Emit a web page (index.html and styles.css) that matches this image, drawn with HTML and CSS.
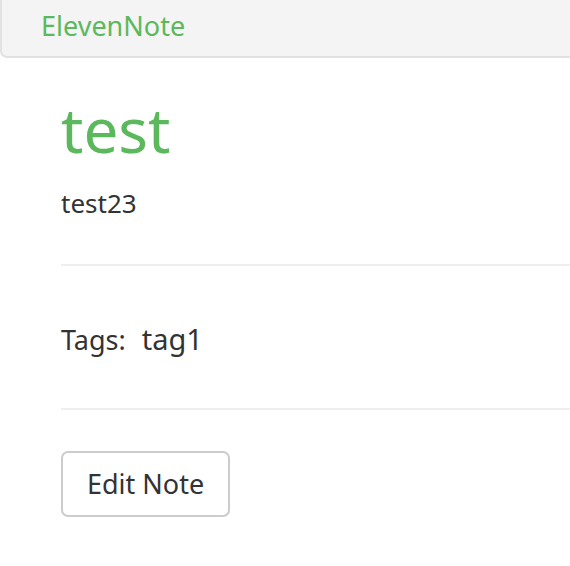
FILE: index.html
```html
<!DOCTYPE html>
<html>
<head>
<meta charset="utf-8">
<link rel="stylesheet" href="styles.css">
</head>
<body>
<nav class="navbar">
  <a class="brand" href="#">ElevenNote</a>
</nav>
<main class="content">
  <h1 class="title">test</h1>
  <p class="body-text">test23</p>
  <hr class="rule">
  <div class="tags"><span class="tags-label">Tags:</span><span class="tag">tag1</span></div>
  <hr class="rule">
  <button class="btn">Edit Note</button>
</main>
</body>
</html>
```
FILE: styles.css
```css
html, body {
  margin: 0;
  padding: 0;
  background: #fff;
  font-family: "Noto Sans", "Open Sans", sans-serif;
  color: #333;
}
.navbar {
  box-sizing: border-box;
  height: 58px;
  background: #f4f4f4;
  border-left: 2px solid #e2e2e2;
  border-bottom: 2px solid #e2e2e2;
  border-bottom-left-radius: 7px;
  padding: 12px 0 0 39px;
}
.brand {
  display: block;
  color: #5cb85c;
  text-decoration: none;
  font-size: 27px;
  line-height: 27px;
}
.content {
  padding-left: 61px;
}
.title {
  margin: 0;
  padding-top: 37px;
  font-weight: normal;
  color: #5cb85c;
  font-size: 62px;
  line-height: 68px;
}
.body-text {
  margin: 22px 0 0;
  font-size: 26px;
  line-height: 36px;
}
.rule {
  border: 0;
  border-top: 2px solid #eee;
  margin: 43px 0 0;
}
.tags + .rule {
  margin-top: 0;
}
.tags {
  display: flex;
  align-items: baseline;
  gap: 16px;
  padding: 53px 0 48px;
}
.tags-label {
  font-size: 27px;
  line-height: 40px;
}
.tag {
  font-size: 29px;
  line-height: 40px;
}
.btn {
  margin-top: 41px;
  font-family: inherit;
  font-size: 27px;
  color: #333;
  background: #fff;
  border: 2px solid #ccc;
  border-radius: 7px;
  padding: 13px 24px;
  line-height: 36px;
}
```
